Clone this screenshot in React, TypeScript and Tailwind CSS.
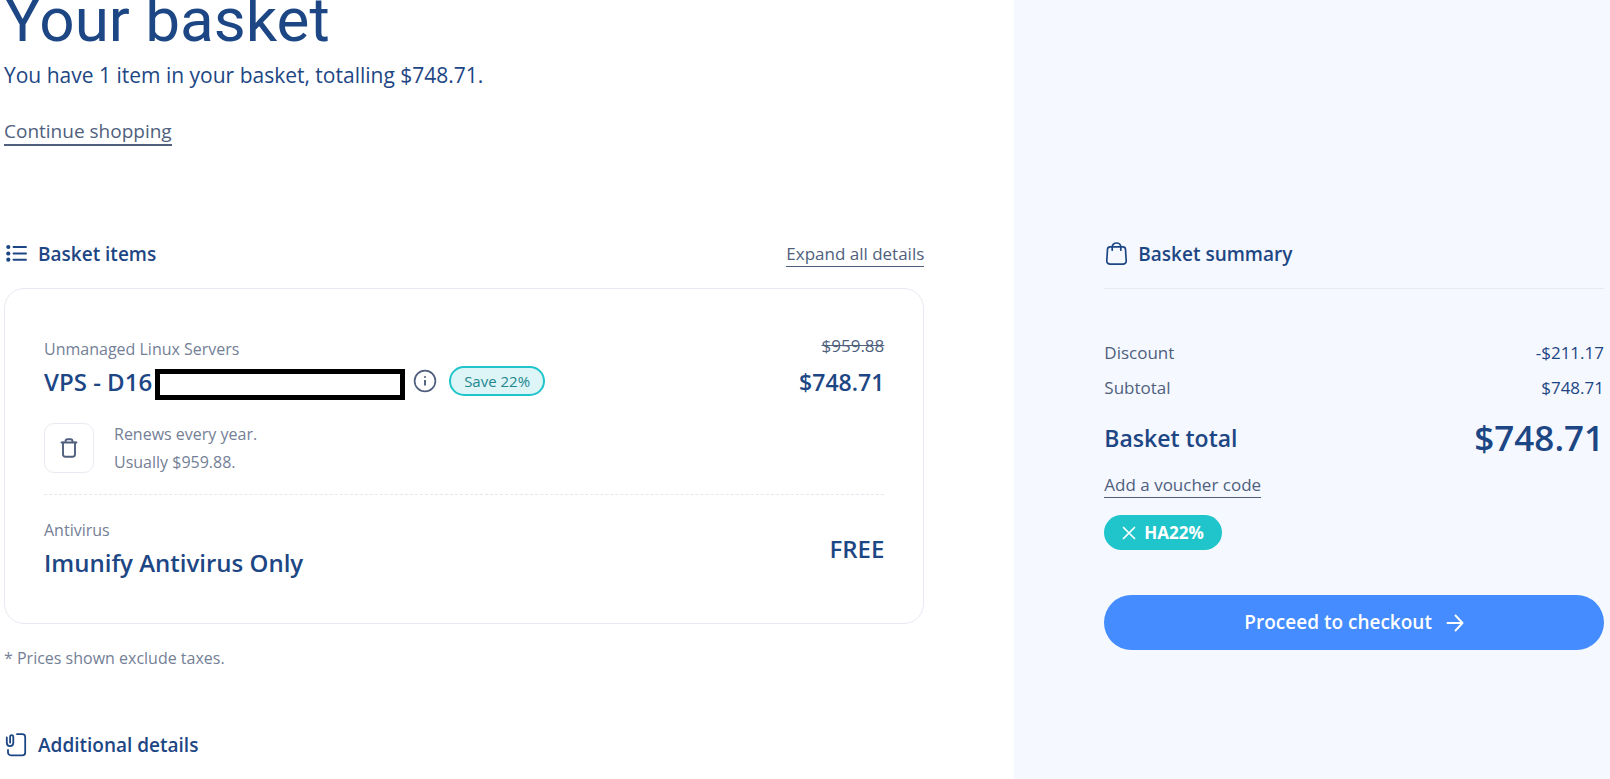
import type { ReactNode } from "react";

const ListIcon = () => (
    <svg viewBox="0 0 24 24" className="h-6 w-6 shrink-0" fill="none" stroke="currentColor" strokeWidth="1.9" strokeLinecap="round">
        <path d="M9.500 5h12.500M9.500 11.500h12.500M9.500 17.700h12.500" />
        <g fill="currentColor" stroke="none">
            <circle cx="4.300" cy="5" r="2.100" />
            <circle cx="4.300" cy="11.500" r="2.100" />
            <circle cx="4.300" cy="17.700" r="2.100" />
        </g>
    </svg>
);

const BagIcon = () => (
    <svg viewBox="0 0 24 24" className="h-6 w-6 shrink-0" fill="none" stroke="currentColor" strokeWidth="1.700" strokeLinecap="round" strokeLinejoin="round">
        <path d="M6.200 4.800h12.600c1.600 0 2.600 1 2.700 2.500l.7 11.200c.2 2.200-1.200 3.700-3.400 3.700H6.200c-2.200 0-3.600-1.500-3.400-3.700l.7-11.200c.1-1.500 1.100-2.500 2.700-2.500Z" />
        <path d="M8.200 8.200V5.200c0-2.400 1.800-4.200 4.300-4.200s4.300 1.800 4.300 4.200v3" />
    </svg>
);

const NoteIcon = () => (
    <svg viewBox="0 0 24 24" className="h-6 w-6 shrink-0" fill="none" stroke="currentColor" strokeWidth="1.800" strokeLinecap="round" strokeLinejoin="round">
        <path d="M13 1.200h5.300c1.700 0 2.900 1.200 2.900 2.900v15.300c0 1.700-1.200 2.900-2.900 2.900H6.900c-1.700 0-2.900-1.200-2.900-2.900V17" />
        <path d="M2.800 4.500v5.300c0 2 1.300 3.300 3.200 3.300s3.300-1.300 3.300-3.300V3.900c0-1-.7-1.700-1.600-1.700S6.100 2.900 6.100 3.900v5.800" />
    </svg>
);

const InfoIcon = () => (
    <svg viewBox="0 0 24 24" className="h-6 w-6" fill="none" stroke="currentColor" strokeWidth="1.700">
        <circle cx="12" cy="12" r="10.400" />
        <path d="M12 11v5.500" strokeWidth="1.900" />
        <circle cx="12" cy="7.900" r="1" fill="currentColor" stroke="none" />
    </svg>
);

const TrashIcon = () => (
    <svg viewBox="0 0 20 20" className="h-5 w-5" fill="none" stroke="currentColor" strokeWidth="1.900" strokeLinecap="round" strokeLinejoin="round">
        <path d="M2.500 4.500h15M6.500 4.500V3.200c0-1.200.8-2 2-2h3c1.200 0 2 .8 2 2v1.300" />
        <path d="M4 4.500v11.800c0 1.500 1 2.500 2.500 2.500h7c1.500 0 2.500-1 2.500-2.500V4.500" />
    </svg>
);

const SectionTitle = ({ icon, children }: { icon: ReactNode; children: ReactNode }) => (
    <h2 className="flex items-center gap-2.5 text-[19px] leading-7 font-semibold">
        {icon}
        {children}
    </h2>
);

const summaryRows = [
    { label: "Discount", value: "-$211.17" },
    { label: "Subtotal", value: "$748.71" },
];

const App = () => {
    return (
        <div className="flex min-h-screen bg-white font-['Open_Sans',sans-serif] text-[#1d4684]">
            <main className="min-w-0 flex-1 pr-[90px] pl-1">
                <h1 className="font-[Roboto,sans-serif] text-[62px] leading-10">Your basket</h1>
                <p className="mt-5 text-[21px] leading-[30px]">You have 1 item in your basket, totalling $748.71.</p>
                <a href="#" className="mt-7 inline-block border-b-2 border-[#4f5f7d] text-[19px] leading-[26px] text-[#4f5f7d]">
                    Continue shopping
                </a>

                {/* Basket items */}
                <section className="mt-[94px]">
                    <div className="flex items-center justify-between">
                        <SectionTitle icon={<ListIcon />}>Basket items</SectionTitle>
                        <button type="button" className="border-b border-[#4f5f7d] text-[17px] leading-6 text-[#4f5f7d]">
                            Expand all details
                        </button>
                    </div>

                    <div className="mt-5 rounded-[20px] border border-[#e9e9f2] px-[39px] pt-[45px] pb-11">
                        <div className="border-b border-dashed border-[#e5e7ee] pb-[18px]">
                            <div className="flex justify-between">
                                <div className="pt-[3px]">
                                    <p className="text-base text-[#748096]">Unmanaged Linux Servers</p>
                                    <div className="mt-[5px] flex min-h-[34px] items-start">
                                        <h3 className="text-2xl leading-8 font-semibold">VPS - D16</h3>
                                        <span className="ml-[3px] h-[31px] w-[250px] self-end border-5 border-black bg-white" />
                                        <div className="ml-2 flex items-center gap-3">
                                            <button type="button" aria-label="More information" className="text-[#4f5f7d]">
                                                <InfoIcon />
                                            </button>
                                            <span className="rounded-full border-2 border-[#1fc5cb] bg-[#def5f7] px-[13px] text-[15px] leading-[26px] font-medium text-[#23868f]">
                                                Save 22%
                                            </span>
                                        </div>
                                    </div>
                                </div>
                                <div className="text-right">
                                    <p className="text-[17px] leading-6 text-[#4f5f7d] line-through">$959.88</p>
                                    <p className="mt-2 text-[23px] leading-8 font-semibold">$748.71</p>
                                </div>
                            </div>
                            <div className="mt-5 flex items-center gap-5">
                                <button
                                    type="button"
                                    aria-label="Remove item"
                                    className="flex h-[50px] w-[50px] items-center justify-center rounded-[10px] border border-[#e9e9f2] text-[#4f5f7d]"
                                >
                                    <TrashIcon />
                                </button>
                                <p className="text-base leading-7 text-[#748096]">
                                    Renews every year.
                                    <br />
                                    Usually $959.88.
                                </p>
                            </div>
                        </div>
                        <div className="flex items-center justify-between pt-[23px]">
                            <div>
                                <p className="text-base text-[#748096]">Antivirus</p>
                                <h3 className="mt-[5px] text-2xl leading-8 font-semibold">Imunify Antivirus Only</h3>
                            </div>
                            <p className="text-2xl leading-8 font-semibold">FREE</p>
                        </div>
                    </div>

                    <p className="mt-[22px] text-base text-[#748096]">* Prices shown exclude taxes.</p>
                </section>

                <section className="mt-[61px]">
                    <SectionTitle icon={<NoteIcon />}>Additional details</SectionTitle>
                </section>
            </main>

            {/* Basket summary */}
            <aside className="w-[37%] bg-[#f5f8ff] pt-60 pr-1.5 pl-[90px]">
                <div className="border-b border-[#e5eaf2] pb-5">
                    <SectionTitle icon={<BagIcon />}>Basket summary</SectionTitle>
                </div>
                <dl className="mt-[46px] text-[17px] leading-[35px]">
                    {summaryRows.map((row) => (
                        <div key={row.label} className="flex justify-between">
                            <dt className="text-[#4f5f7d]">{row.label}</dt>
                            <dd>{row.value}</dd>
                        </div>
                    ))}
                    <div className="mt-2 flex items-center justify-between font-semibold">
                        <dt className="text-[23px] leading-8">Basket total</dt>
                        <dd className="text-[35px] leading-[50px]">$748.71</dd>
                    </div>
                </dl>
                <button type="button" className="mt-2.5 block border-b border-[#4f5f7d] text-[17px] leading-6 text-[#4f5f7d]">
                    Add a voucher code
                </button>
                <button type="button" className="mt-[17px] flex h-[35px] items-center gap-2 rounded-full bg-[#1fc5cb] px-[18px] text-[17px] font-bold text-white">
                    <svg viewBox="0 0 14 14" className="h-3.5 w-3.5" fill="none" stroke="currentColor" strokeWidth="1.700" strokeLinecap="round">
                        <path d="M1.500 1.500l11 11M12.500 1.500l-11 11" />
                    </svg>
                    HA22%
                </button>
                <button type="button" className="mt-[45px] flex h-[55px] w-full items-center justify-center gap-3.5 rounded-full bg-[#448cff] text-[19px] font-semibold text-white">
                    Proceed to checkout
                    <svg viewBox="0 0 18 18" className="h-[18px] w-[18px]" fill="none" stroke="currentColor" strokeWidth="1.900" strokeLinecap="round" strokeLinejoin="round">
                        <path d="M1.500 9h15M9.500 1.500l7 7.500-7 7.500" />
                    </svg>
                </button>
            </aside>
        </div>
    );
};

export default App;
